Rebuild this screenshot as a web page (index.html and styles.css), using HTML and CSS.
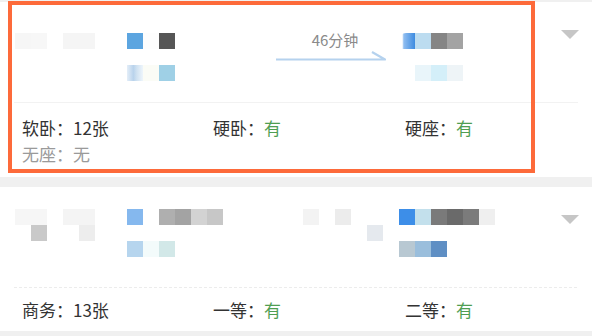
FILE: index.html
```html
<!DOCTYPE html>
<html lang="zh-CN">
<head>
<meta charset="utf-8">
<title>车次列表</title>
<link rel="stylesheet" href="styles.css">
</head>
<body>
<div class="list">
  <div class="card card-a">
    <div class="top">
      <div class="mosaic left">
        <i class="c f6"></i><i class="c f7"></i><i class="c"></i><i class="c f5"></i><i class="c f5"></i>
      </div>
      <div class="mosaic col6">
        <i class="c b1"></i><i class="c fd"></i><i class="c g55"></i><i class="c"></i><i class="c"></i><i class="c"></i>
        <i class="c"></i><i class="c"></i><i class="c"></i><i class="c"></i><i class="c"></i><i class="c"></i>
        <i class="c fade"></i><i class="c fb"></i><i class="c lb1"></i><i class="c"></i><i class="c"></i><i class="c"></i>
      </div>
      <div class="dur">
        <span class="dur-text">46分钟</span>
        <svg class="arrow" width="110" height="14" viewBox="0 0 110 14"><path d="M0 10.5H109L96 3" fill="none" stroke="#b5d2ee" stroke-width="2.2" stroke-linejoin="round"/></svg>
      </div>
      <div class="mosaic col6">
        <i class="c blue-r"></i><i class="c lb2"></i><i class="c g85"></i><i class="c ga3"></i><i class="c"></i><i class="c"></i>
        <i class="c"></i><i class="c"></i><i class="c"></i><i class="c"></i><i class="c"></i><i class="c"></i>
        <i class="c"></i><i class="c lb3"></i><i class="c lb4"></i><i class="c lb5"></i><i class="c"></i><i class="c"></i>
      </div>
      <span class="caret"></span>
    </div>
    <div class="sep"></div>
    <div class="seats">
      <span class="seat">软卧：<span class="num">12张</span></span>
      <span class="seat">硬卧：<span class="ok">有</span></span>
      <span class="seat">硬座：<span class="ok">有</span></span>
      <span class="seat none">无座：无</span>
    </div>
    <div class="highlight"></div>
  </div>

  <div class="card card-b">
    <div class="top">
      <div class="mosaic left">
        <i class="c f6"></i><i class="c f6"></i><i class="c"></i><i class="c f4"></i><i class="c f4"></i>
        <i class="c"></i><i class="c gc9"></i><i class="c"></i><i class="c"></i><i class="c ged"></i>
      </div>
      <div class="mosaic col6">
        <i class="c b2"></i><i class="c"></i><i class="c gaf"></i><i class="c ga3"></i><i class="c gd3"></i><i class="c gc7"></i>
        <i class="c"></i><i class="c"></i><i class="c"></i><i class="c"></i><i class="c"></i><i class="c"></i>
        <i class="c lb6"></i><i class="c lb7"></i><i class="c lb8"></i><i class="c"></i><i class="c"></i><i class="c"></i>
      </div>
      <div class="mosaic col8">
        <i class="c"></i><i class="c"></i><i class="c f3"></i><i class="c"></i><i class="c ec"></i><i class="c"></i><i class="c"></i><i class="c"></i>
        <i class="c"></i><i class="c"></i><i class="c"></i><i class="c"></i><i class="c"></i><i class="c"></i><i class="c e5"></i><i class="c"></i>
      </div>
      <div class="mosaic col6">
        <i class="c b3"></i><i class="c lb9"></i><i class="c g7a"></i><i class="c g6a"></i><i class="c g7b"></i><i class="c ef"></i>
        <i class="c"></i><i class="c"></i><i class="c"></i><i class="c"></i><i class="c"></i><i class="c"></i>
        <i class="c bg1"></i><i class="c bg2"></i><i class="c bg3"></i><i class="c"></i><i class="c"></i><i class="c"></i>
      </div>
      <span class="caret"></span>
    </div>
    <div class="sep dotted"></div>
    <div class="seats">
      <span class="seat">商务：<span class="num">13张</span></span>
      <span class="seat">一等：<span class="ok">有</span></span>
      <span class="seat">二等：<span class="ok">有</span></span>
    </div>
  </div>
</div>
</body>
</html>
```

FILE: styles.css
```css
* { box-sizing: border-box; }

html, body {
  margin: 0;
  background: #f0f0f0;
  font-family: "Noto Sans CJK SC", "Noto Sans", sans-serif;
  color: #333;
}

body { padding-top: 2px; }

.list {
  display: flex;
  flex-direction: column;
  gap: 10px;
}

.card {
  position: relative;
  background: #fff;
}

.top {
  height: 100px;
  padding: 26px 0 0 15px;
  display: grid;
  grid-template-columns: 112px 144px 128px 162px 18px;
  align-items: start;
}

.mosaic {
  display: grid;
  grid-auto-rows: 16px;
}
.card-a .mosaic { margin-top: 5px; }
.card-b .mosaic { margin-top: -4px; }

.left { grid-template-columns: repeat(5, 16px); }
.col6 { grid-template-columns: repeat(6, 16px); }
.col8 { grid-template-columns: repeat(8, 16px); }

.c { display: block; width: 16px; height: 16px; }

/* mosaic cell colours */
.f3 { background: #f3f3f3; }
.f4 { background: #f4f4f4; }
.f5 { background: #f5f5f5; }
.f6 { background: #f6f6f6; }
.f7 { background: #f7f7f7; }
.fd { background: #fdfdfd; }
.fb { background: #fbfcf6; }
.ec { background: #ececec; }
.ef { background: #efefef; }
.e5 { background: #e5e9ee; }
.ged { background: #ededed; }
.gc9 { background: #c9c9c9; }
.g55 { background: #565656; }
.g85 { background: #858585; }
.ga3 { background: #a3a3a3; }
.gaf { background: #afafaf; }
.gd3 { background: #d3d3d3; }
.gc7 { background: #c7c7c7; }
.g7a { background: #7a7a7a; }
.g6a { background: #6a6a6a; }
.g7b { background: #7b7b7b; }
.b1 { background: #5ca5e0; }
.b2 { background: #85b8ee; }
.b3 { background: #3d8ee8; }
.lb1 { background: #9fd0e6; }
.lb2 { background: #bcdcf0; }
.lb3 { background: #e9f5fa; }
.lb4 { background: #d4eff9; }
.lb5 { background: #eef4f7; }
.lb6 { background: #b6d5ee; }
.lb7 { background: #f3fbfb; }
.lb8 { background: #d2e8e8; }
.lb9 { background: #c3e0ec; }
.bg1 { background: #b8c8d2; }
.bg2 { background: #9abedc; }
.bg3 { background: #5f8fc4; }
.fade { background: linear-gradient(90deg, #e4eef8 0%, #b9d3ec 40%, #cfe1f1 60%, #eef5fb 100%); }
.blue-r {
  background: linear-gradient(90deg, #ffffff 0 20%, #8fbdf0 30%, #3d8be0 100%);
  border-top-left-radius: 7px;
}

.dur {
  margin-top: 2px;
  display: flex;
  flex-direction: column;
  align-items: center;
}
.dur-text {
  font-size: 15px;
  line-height: 20px;
  color: #8a8a8a;
}
.arrow {
  display: block;
  margin-top: -1px;
  margin-left: -8px;
}

.caret {
  margin-top: 2px;
  width: 0;
  height: 0;
  border-left: 9px solid transparent;
  border-right: 9px solid transparent;
  border-top: 9px solid #c6c6c6;
}

.sep {
  height: 1px;
  margin: 0 14px;
  background: #f2f2f2;
}
.sep.dotted {
  background: repeating-linear-gradient(90deg, #ececec 0 3px, transparent 3px 5px);
}

.seats {
  display: grid;
  grid-template-columns: 191px 192px 1fr;
  padding: 12px 0 10px 22px;
  font-size: 17px;
  line-height: 26px;
}
.card-b .seats { padding: 9px 0 8px 22px; }
.seat { color: #333; }
.ok { color: #4f9e52; }
.none { color: #9a9a9a; }

.highlight {
  position: absolute;
  left: 8px;
  top: -1px;
  width: 527px;
  height: 172px;
  border: 4px solid #fd6a3a;
  pointer-events: none;
}
```
